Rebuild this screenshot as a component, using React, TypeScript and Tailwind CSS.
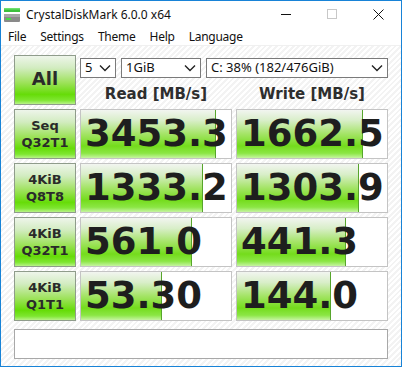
import React from 'react';

const rows = [
  { top: 'Seq', bottom: 'Q32T1', read: '3453.3', readBar: 135, write: '1662.5', writeBar: 126 },
  { top: '4KiB', bottom: 'Q8T8', read: '1333.2', readBar: 122, write: '1303.9', writeBar: 122 },
  { top: '4KiB', bottom: 'Q32T1', read: '561.0', readBar: 111, write: '441.3', writeBar: 109 },
  { top: '4KiB', bottom: 'Q1T1', read: '53.30', readBar: 81, write: '144.0', writeBar: 94 },
];

const btnBg =
  'bg-[linear-gradient(to_bottom,#eef5ea_0%,#d2ecc0_25%,#9ee25c_55%,#66dc08_80%,#7ee630_92%,#b8f388_100%)]';
const barBg =
  'bg-[linear-gradient(to_bottom,#f2f5f0_0%,#d8eec8_22%,#a4e466_50%,#74dc1c_75%,#8be644_90%,#c6f4a2_100%)]';

const Chevron = () => (
  <svg width="12" height="8" viewBox="0 0 12 8" className="shrink-0">
    <path d="M1 1.5 L6 6.5 L11 1.5" fill="none" stroke="#222" strokeWidth="1.4" />
  </svg>
);

const Select = ({ label, width }: { label: string; width: string }) => (
  <div className={`${width} h-[20px] border border-[#7a7a7a] bg-white flex items-center justify-between pl-[4px] pr-[4px] text-[13px] text-[#111]`}>
    <span>{label}</span>
    <Chevron />
  </div>
);

const TestButton = ({ children }: { children: React.ReactNode }) => (
  <div className={`h-full border border-[#8f9c8b] ${btnBg} flex flex-col items-center justify-center font-bold text-[#2a2a2a] leading-[17px]`} style={{ fontFamily: '"DejaVu Sans", sans-serif' }}>
    {children}
  </div>
);

const Cell = ({ value, bar }: { value: string; bar: number }) => (
  <div className="relative h-full border border-[#c4c4c4] bg-white overflow-hidden">
    <div className={`absolute left-0 top-0 bottom-0 ${barBg} border-r border-[#57a52c]`} style={{ width: bar }} />
    <div
      className="relative h-full flex items-center pl-[4px] text-[37px] font-bold text-[#1e1e1e] leading-none pb-[1px]"
      style={{ fontFamily: '"DejaVu Sans", sans-serif' }}
    >
      {value}
    </div>
  </div>
);

export default function App() {
  return (
    <div
      className="w-[402px] h-[367px] border border-[#1883d7] bg-white flex flex-col overflow-hidden"
      style={{ fontFamily: '"Noto Sans", "Open Sans", sans-serif' }}
    >
      {/* title bar */}
      <div className="h-[26px] flex items-center shrink-0">
        <svg width="16" height="16" viewBox="0 0 16 16" className="ml-[3px] mt-[2px]">
          <rect x="0" y="1" width="16" height="4" fill="#3cc03c" />
          <rect x="0" y="1" width="16" height="1.5" fill="#6ee06e" />
          <rect x="0" y="7" width="16" height="8" rx="1" fill="#8a8a8a" />
          <rect x="0" y="7" width="16" height="3" fill="#a8a8a8" />
          <rect x="2" y="11" width="5" height="2" fill="#44dd44" />
        </svg>
        <span className="ml-[6px] text-[12px] text-[#111] mt-[1px]">CrystalDiskMark 6.0.0 x64</span>
        <div className="ml-auto flex items-center h-full">
          <div className="w-[46px] h-full flex items-center justify-center">
            <div className="w-[10px] h-px bg-[#111]" />
          </div>
          <div className="w-[46px] h-full flex items-center justify-center">
            <div className="w-[10px] h-[10px] border border-[#c8c8c8]" />
          </div>
          <div className="w-[46px] h-full flex items-center justify-center">
            <svg width="11" height="11" viewBox="0 0 11 11">
              <path d="M0.5 0.5 L10.5 10.5 M10.5 0.5 L0.5 10.5" stroke="#111" strokeWidth="1" />
            </svg>
          </div>
        </div>
      </div>

      {/* menu */}
      <div className="h-[18px] flex items-center text-[12px] tracking-[-0.25px] text-[#111] shrink-0 pt-[1px]">
        {['File', 'Settings', 'Theme', 'Help', 'Language'].map((m) => (
          <span key={m} className="px-[7px]">
            {m}
          </span>
        ))}
      </div>
      <div className="h-px bg-[#f0f0f0] shrink-0" />

      {/* content */}
      <div className="flex-1 px-[13px] pt-[9px] bg-[repeating-linear-gradient(135deg,#ffffff_0px,#ffffff_2px,#f3f3f3_2px,#f3f3f3_4px)]">
        <div className="grid grid-cols-[62px_152px_152px] gap-x-[4px] gap-y-[4px] grid-rows-[50px_50px_50px_50px_50px]">
          <TestButton>
            <span className="text-[18px] mb-[3px]">All</span>
          </TestButton>
          <div className="col-span-2 flex flex-col">
            <div className="flex gap-[5px] mt-[3px]">
              <Select label="5" width="w-[36px]" />
              <Select label="1GiB" width="w-[80px]" />
              <Select label="C: 38% (182/476GiB)" width="w-[182px]" />
            </div>
            <div className="flex flex-1 items-center font-bold text-[15px] text-[#2e2e2e] pt-[5px]" style={{ fontFamily: '"DejaVu Sans", sans-serif' }}>
              <div className="w-[152px] text-center">Read [MB/s]</div>
              <div className="w-[4px]" />
              <div className="w-[152px] text-center">Write [MB/s]</div>
            </div>
          </div>
          {rows.map((r, i) => (
            <React.Fragment key={i}>
              <TestButton>
                <span className="text-[13px]">{r.top}</span>
                <span className="text-[13px]">{r.bottom}</span>
              </TestButton>
              <Cell value={r.read} bar={r.readBar} />
              <Cell value={r.write} bar={r.writeBar} />
            </React.Fragment>
          ))}
        </div>
        <div className="mt-[8px] h-[30px] border border-[#a8a8a8] bg-white" />
      </div>
    </div>
  );
}
